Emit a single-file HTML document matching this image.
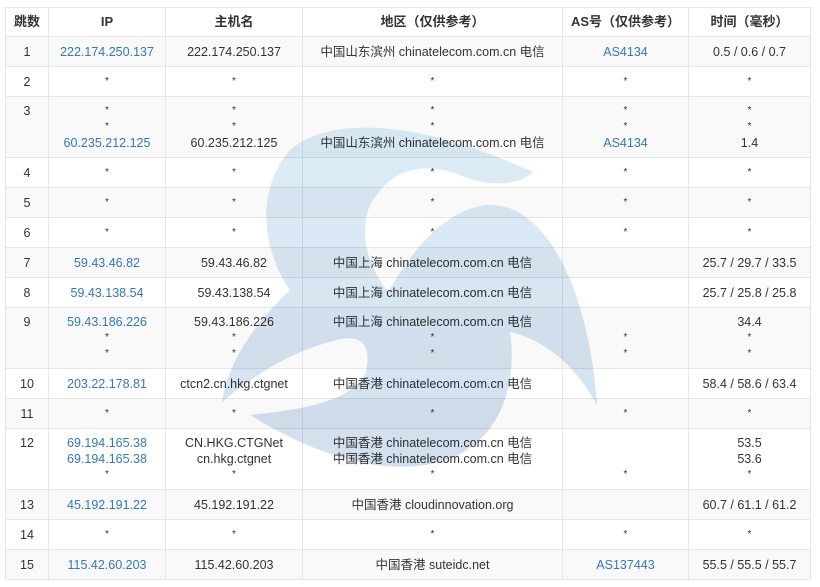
<!DOCTYPE html>
<html><head><meta charset="utf-8"><style>
body{margin:0;background:#fff;width:820px;height:587px;overflow:hidden;font-family:"Liberation Sans","Noto Sans CJK SC",sans-serif;font-size:12.5px;color:#333;position:relative}
table{position:absolute;left:5px;top:7px;width:805px;border-collapse:collapse;table-layout:fixed}
td,th{border:1px solid #e6e6e6;text-align:center;padding:0;line-height:16px;vertical-align:top}
th{height:28px;vertical-align:middle;font-weight:bold;font-size:13px}
tr.o td{background:#f9f9f9}
td{padding-top:7px;height:22px}
td.t{height:54px;padding-top:6px}
td div{height:16px;line-height:16px}
a{color:#3577b9;text-decoration:none}
.s{font-size:10px}
svg{position:absolute;left:0;top:0;mix-blend-mode:multiply;pointer-events:none}
</style></head><body>
<table>
<colgroup><col style="width:43px"><col style="width:117px"><col style="width:137px"><col style="width:260px"><col style="width:126px"><col style="width:122px"></colgroup>
<tr><th>跳数</th><th>IP</th><th>主机名</th><th>地区（仅供参考）</th><th>AS号（仅供参考）</th><th>时间（毫秒）</th></tr>
<tr class="o"><td>1</td><td><a>222.174.250.137</a></td><td>222.174.250.137</td><td>中国山东滨州 chinatelecom.com.cn 电信</td><td><a>AS4134</a></td><td>0.5 / 0.6 / 0.7</td></tr>
<tr><td>2</td><td class="s">*</td><td class="s">*</td><td class="s">*</td><td class="s">*</td><td class="s">*</td></tr>
<tr class="o"><td class="t">3</td><td class="t"><div class="s">*</div><div class="s">*</div><div><a>60.235.212.125</a></div></td><td class="t"><div class="s">*</div><div class="s">*</div><div>60.235.212.125</div></td><td class="t"><div class="s">*</div><div class="s">*</div><div>中国山东滨州 chinatelecom.com.cn 电信</div></td><td class="t"><div class="s">*</div><div class="s">*</div><div><a>AS4134</a></div></td><td class="t"><div class="s">*</div><div class="s">*</div><div>1.4</div></td></tr>
<tr><td>4</td><td class="s">*</td><td class="s">*</td><td class="s">*</td><td class="s">*</td><td class="s">*</td></tr>
<tr class="o"><td>5</td><td class="s">*</td><td class="s">*</td><td class="s">*</td><td class="s">*</td><td class="s">*</td></tr>
<tr><td>6</td><td class="s">*</td><td class="s">*</td><td class="s">*</td><td class="s">*</td><td class="s">*</td></tr>
<tr class="o"><td>7</td><td><a>59.43.46.82</a></td><td>59.43.46.82</td><td>中国上海 chinatelecom.com.cn 电信</td><td></td><td>25.7 / 29.7 / 33.5</td></tr>
<tr><td>8</td><td><a>59.43.138.54</a></td><td>59.43.138.54</td><td>中国上海 chinatelecom.com.cn 电信</td><td></td><td>25.7 / 25.8 / 25.8</td></tr>
<tr class="o"><td class="t">9</td><td class="t"><div><a>59.43.186.226</a></div><div class="s">*</div><div class="s">*</div></td><td class="t"><div>59.43.186.226</div><div class="s">*</div><div class="s">*</div></td><td class="t"><div>中国上海 chinatelecom.com.cn 电信</div><div class="s">*</div><div class="s">*</div></td><td class="t"><div></div><div class="s">*</div><div class="s">*</div></td><td class="t"><div>34.4</div><div class="s">*</div><div class="s">*</div></td></tr>
<tr><td>10</td><td><a>203.22.178.81</a></td><td>ctcn2.cn.hkg.ctgnet</td><td>中国香港 chinatelecom.com.cn 电信</td><td></td><td>58.4 / 58.6 / 63.4</td></tr>
<tr class="o"><td>11</td><td class="s">*</td><td class="s">*</td><td class="s">*</td><td class="s">*</td><td class="s">*</td></tr>
<tr><td class="t">12</td><td class="t"><div><a>69.194.165.38</a></div><div><a>69.194.165.38</a></div><div class="s">*</div></td><td class="t"><div>CN.HKG.CTGNet</div><div>cn.hkg.ctgnet</div><div class="s">*</div></td><td class="t"><div>中国香港 chinatelecom.com.cn 电信</div><div>中国香港 chinatelecom.com.cn 电信</div><div class="s">*</div></td><td class="t"><div></div><div></div><div class="s">*</div></td><td class="t"><div>53.5</div><div>53.6</div><div class="s">*</div></td></tr>
<tr class="o"><td>13</td><td><a>45.192.191.22</a></td><td>45.192.191.22</td><td>中国香港 cloudinnovation.org</td><td></td><td>60.7 / 61.1 / 61.2</td></tr>
<tr><td>14</td><td class="s">*</td><td class="s">*</td><td class="s">*</td><td class="s">*</td><td class="s">*</td></tr>
<tr class="o"><td>15</td><td><a>115.42.60.203</a></td><td>115.42.60.203</td><td>中国香港 suteidc.net</td><td><a>AS137443</a></td><td>55.5 / 55.5 / 55.7</td></tr>
</table>
<svg width="820" height="587" viewBox="0 0 820 587">
<defs><linearGradient id="g" x1="0" y1="0" x2="0" y2="1"><stop offset="0" stop-color="#dcedf8"/><stop offset="1" stop-color="#d3dfed"/></linearGradient></defs>
<path fill="url(#g)" d="M290 290 C262 250 255 190 290 150 C330 115 420 120 533 172 C520 185 490 188 460 175 C420 160 390 170 370 205 C358 235 368 265 388 292 C410 255 440 212 485 205 C550 200 590 300 597 405 C575 365 545 340 510 332 C518 385 500 445 440 462 C380 478 310 452 250 415 C300 410 352 402 366 372 C372 342 360 332 330 342 C290 352 250 378 222 402 C228 360 258 320 290 290 Z"/>
</svg>
</body></html>
